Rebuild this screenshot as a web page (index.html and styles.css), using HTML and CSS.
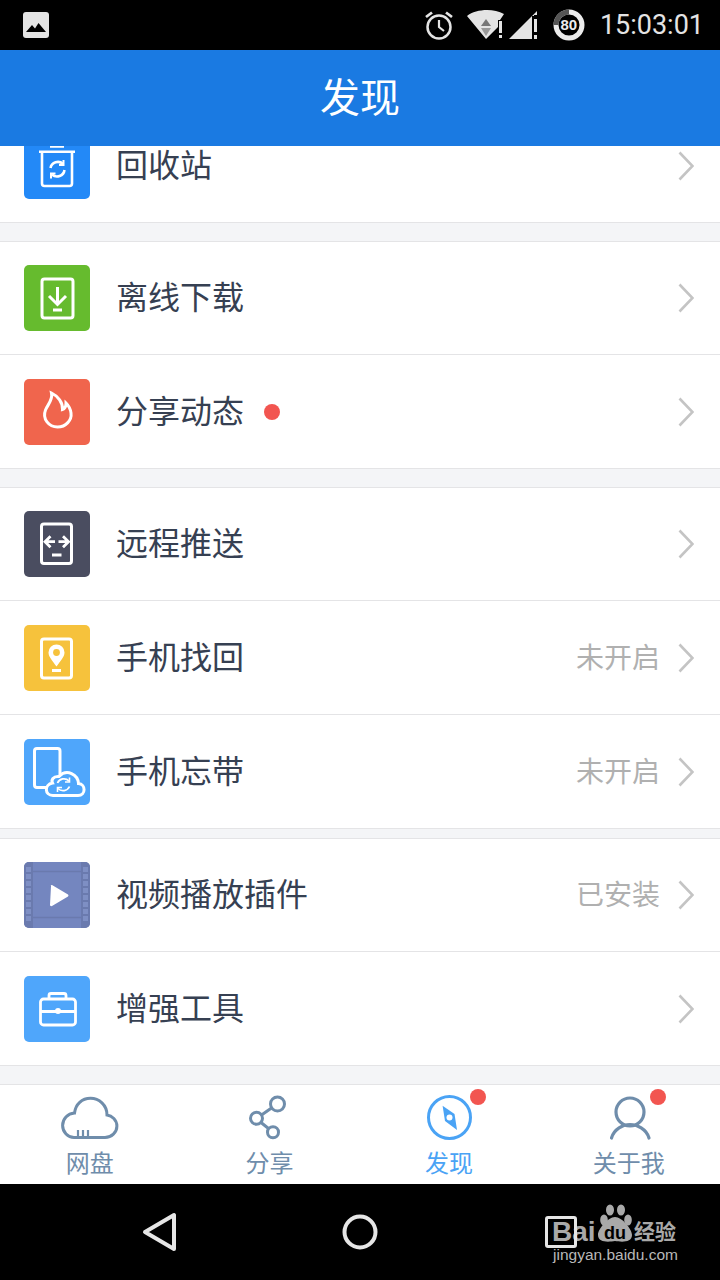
FILE: index.html
```html
<!DOCTYPE html>
<html lang="zh">
<head>
  <meta charset="UTF-8">
  <meta name="viewport" content="width=device-width, initial-scale=1.0">
  <title>发现</title>
  <link rel="stylesheet" href="styles.css">
</head>
<body>
  <div class="screen">
    <div class="status-bar">
      <svg class="status-pic" width="28" height="28" viewBox="0 0 28 28">
        <rect x="1" y="1" width="26" height="26" rx="3" fill="#e4e4e4"/>
        <path d="M4 21 L10 14 L13 17.5 L16.5 12 L24 21 Z" fill="#000"/>
      </svg>
      <div class="status-right">
        <svg width="34" height="34" viewBox="0 0 34 34" fill="none" stroke="#e4e4e4">
          <circle cx="17" cy="19" r="11.5" stroke-width="2.5"/>
          <path d="M17 12 V19 L22 23" stroke-width="2.2"/>
          <path d="M4 9 L10 4.5 M30 9 L24 4.5" stroke-width="2.8"/>
        </svg>
        <svg class="status-wifi" width="38" height="32" viewBox="0 0 38 32">
          <path d="M0 7 C9 0 26 -1 37 5 L33 11 L31 11 L31 18 L19 30 Z" fill="#e4e4e4"/>
          <path d="M19 10 L24 17 H14 Z" fill="#777"/>
          <path d="M14 19 H24 L19 27 Z" fill="#999"/>
          <rect x="32" y="12" width="3" height="12" fill="#e4e4e4"/>
          <rect x="32" y="26" width="3" height="3" fill="#e4e4e4"/>
        </svg>
        <svg class="status-signal" width="30" height="32" viewBox="0 0 30 32">
          <path d="M1 30 L24 7 V30 Z" fill="#e4e4e4"/>
          <path d="M24 7 L29 2 V6 H26 V7 Z" fill="#e4e4e4"/>
          <rect x="26" y="10" width="3" height="13" fill="#e4e4e4"/>
          <rect x="26" y="26" width="3" height="4" fill="#e4e4e4"/>
        </svg>
        <div class="status-battery">
          <svg width="32" height="32" viewBox="0 0 32 32" fill="none" stroke-width="5">
            <circle cx="16" cy="16" r="13" stroke="#ececec"/>
            <path d="M3 16 A13 13 0 0 1 16 3" stroke="#555"/>
          </svg>
          <span class="battery-num">80</span>
        </div>
        <span class="status-time">15:03:01</span>
      </div>
    </div>

    <div class="title-bar">发现</div>

    <div class="list-area">
      <div class="group group-first">
        <div class="row">
          <svg class="row-icon ic-blue" viewBox="0 0 66 66" fill="none" stroke="#fff" stroke-width="2.6">
            <path d="M26 13.5 H40 M15 18.7 H51"/>
            <path d="M18 19 V50.5 Q18 53 20.5 53 H45.5 Q48 53 48 50.5 V19"/>
            <path d="M26.5 35 A7.5 7.5 0 0 1 39 31 M40.500 37 A7.5 7.5 0 0 1 28 41.5"/>
            <path d="M39.5 27 V32 H35 M27 45.5 V40.500 H31.500" stroke-width="2"/>
          </svg>
          <span class="row-name">回收站</span>
          <svg class="chevron" viewBox="0 0 16 30"><path d="M1.5 1.5 L14.5 15 L1.5 28.5"/></svg>
        </div>
      </div>

      <div class="group">
        <div class="row">
          <svg class="row-icon ic-green" viewBox="0 0 66 66" fill="none" stroke="#fff" stroke-width="3">
            <rect x="18" y="14" width="31" height="39" rx="2.5"/>
            <path d="M33.5 22 V39 M25 31 L33.5 39.5 L42 31"/>
            <path d="M29 45 H38"/>
          </svg>
          <span class="row-name">离线下载</span>
          <svg class="chevron" viewBox="0 0 16 30"><path d="M1.5 1.5 L14.5 15 L1.5 28.5"/></svg>
        </div>
        <div class="row">
          <svg class="row-icon ic-red" viewBox="0 0 66 66" fill="none" stroke="#fff" stroke-width="3">
            <path d="M27.5 14 C29 21 24 25 21.5 31 C18 40 25 48 33.5 48 C42 48 48 41 47 34 C46.5 30 44.5 26.5 42 24 C42 28 40.5 30 38.5 30.5 C39 24 34 17 27.5 14 Z"/>
          </svg>
          <span class="row-name">分享动态</span>
          <span class="row-dot"></span>
          <svg class="chevron" viewBox="0 0 16 30"><path d="M1.5 1.5 L14.5 15 L1.5 28.5"/></svg>
        </div>
      </div>

      <div class="group">
        <div class="row">
          <svg class="row-icon ic-dark" viewBox="0 0 66 66" fill="none" stroke="#fff" stroke-width="3">
            <rect x="17.5" y="13" width="30" height="39.5" rx="2.5"/>
            <path d="M31 30.700 H21.500 M26.500 25.200 L21 30.700 L26.500 36.200 M34.500 30.700 H44 M39 25.200 L44.500 30.700 L39 36.200" stroke-width="2.800"/>
            <path d="M28 44 H37.5"/>
          </svg>
          <span class="row-name">远程推送</span>
          <svg class="chevron" viewBox="0 0 16 30"><path d="M1.5 1.5 L14.5 15 L1.5 28.5"/></svg>
        </div>
        <div class="row">
          <svg class="row-icon ic-yellow" viewBox="0 0 66 66" fill="none" stroke="#fff" stroke-width="3">
            <rect x="17.5" y="14" width="30" height="39" rx="2.5"/>
            <path d="M32.5 41.5 C29 36.5 24.5 32 24.5 27.5 A8 8 0 0 1 40.5 27.5 C40.5 32 36 36.5 32.5 41.5 Z" fill="#fff" stroke="none"/>
            <circle cx="32.5" cy="27.5" r="3.4" fill="#f6c23c" stroke="none"/>
            <path d="M28 45.5 H37"/>
          </svg>
          <span class="row-name">手机找回</span>
          <span class="row-value">未开启</span>
          <svg class="chevron" viewBox="0 0 16 30"><path d="M1.5 1.5 L14.5 15 L1.5 28.5"/></svg>
        </div>
        <div class="row">
          <svg class="row-icon ic-sky" viewBox="0 0 66 66" fill="none" stroke="#fff" stroke-width="3">
            <rect x="10.5" y="9.5" width="25.5" height="39" rx="2.5"/>
            <path d="M29 56.5 H54 C62 56.5 62 45 54.5 44.5 C54 36 43 29 35 37.5 C29 37 27 41 28.5 44 C20 45.5 20.5 56.5 29 56.5 Z" fill="#4fa6fb"/>
            <path d="M33.5 44 A7 7 0 0 1 45 42 M45.5 47.5 A7 7 0 0 1 34 49.5" stroke-width="1.8"/>
            <path d="M45.5 38.5 V43 H41 M33.5 53 V48.5 H38" stroke-width="1.6"/>
          </svg>
          <span class="row-name">手机忘带</span>
          <span class="row-value">未开启</span>
          <svg class="chevron" viewBox="0 0 16 30"><path d="M1.5 1.5 L14.5 15 L1.5 28.5"/></svg>
        </div>
      </div>

      <div class="group group-near">
        <div class="row">
          <svg class="row-icon ic-film" viewBox="0 0 66 66">
            <rect x="0" y="0" width="9" height="66" fill="#6a7aae"/>
            <rect x="57" y="0" width="9" height="66" fill="#6a7aae"/>
            <path d="M2 5 h5 v5 h-5z M2 12 h5 v5 h-5z M2 19 h5 v5 h-5z M2 26 h5 v5 h-5z M2 33 h5 v5 h-5z M2 40 h5 v5 h-5z M2 47 h5 v5 h-5z M2 54 h5 v5 h-5z M59 5 h5 v5 h-5z M59 12 h5 v5 h-5z M59 19 h5 v5 h-5z M59 26 h5 v5 h-5z M59 33 h5 v5 h-5z M59 40 h5 v5 h-5z M59 47 h5 v5 h-5z M59 54 h5 v5 h-5z" fill="#7e8fc4"/>
            <path d="M9 9.5 H57 M9 55.5 H57" stroke="#6a7aae" stroke-width="1.6"/>
            <path d="M27 24 Q26 23 28 23 L44 32.5 Q45 33.5 44 34.5 L28 44 Q26 44.5 26 43 Z" fill="#fff"/>
          </svg>
          <span class="row-name">视频播放插件</span>
          <span class="row-value">已安装</span>
          <svg class="chevron" viewBox="0 0 16 30"><path d="M1.5 1.5 L14.5 15 L1.5 28.5"/></svg>
        </div>
        <div class="row">
          <svg class="row-icon ic-sky" viewBox="0 0 66 66" fill="none" stroke="#fff" stroke-width="2.8">
            <rect x="16.5" y="23" width="35" height="26" rx="3"/>
            <path d="M25 23 V19.5 Q25 17.5 27 17.5 H40 Q42 17.5 42 19.5 V23"/>
            <path d="M16.5 35.5 H51"/>
            <circle cx="34" cy="35" r="3" fill="#fff" stroke="none"/>
          </svg>
          <span class="row-name">增强工具</span>
          <svg class="chevron" viewBox="0 0 16 30"><path d="M1.5 1.5 L14.5 15 L1.5 28.5"/></svg>
        </div>
      </div>
    </div>

    <div class="tab-bar">
      <div class="tab">
        <svg class="tab-icon" viewBox="0 0 64 50" fill="none" stroke="#6f8dab" stroke-width="3">
          <path d="M16 44.500 H47 C53.500 44.500 58.900 39.500 58.900 33 C58.900 27 54 22.500 49 22 C49 12 41 5.300 32.500 5.300 C24 5.300 17.500 11 16.500 20 C9.500 20.500 4.600 26 4.600 32.500 C4.600 39 10 44.500 16 44.500 Z"/>
          <path d="M20 44 V37 M25 44 V37 M30 44 V37" stroke-width="2.200"/>
        </svg>
        <span class="tab-label">网盘</span>
      </div>
      <div class="tab">
        <svg class="tab-icon" viewBox="0 0 64 50" fill="none" stroke="#6f8dab" stroke-width="3">
          <circle cx="40.500" cy="11" r="7"/>
          <circle cx="19.500" cy="25.300" r="6"/>
          <circle cx="36" cy="39.300" r="5.500"/>
          <path d="M34.500 15 L24.500 22 M24 29.500 L31.500 35.500"/>
        </svg>
        <span class="tab-label">分享</span>
      </div>
      <div class="tab tab-active">
        <svg class="tab-icon" viewBox="0 0 64 50">
          <circle cx="32.500" cy="24.500" r="21" fill="none" stroke="#4aa3f5" stroke-width="3"/>
          <path d="M25.600 12.700 L37.500 21 L40 37 L28 28 Z" fill="#4aa3f5"/>
          <circle cx="32.500" cy="24.500" r="3" fill="#fff"/>
        </svg>
        <span class="tab-label">发现</span>
        <span class="tab-dot"></span>
      </div>
      <div class="tab">
        <svg class="tab-icon" viewBox="0 0 64 50" fill="none" stroke="#6f8dab" stroke-width="3.200" stroke-linecap="round">
          <circle cx="33" cy="19" r="14"/>
          <path d="M14.500 45 C17 36 26 31.500 33 31.500 C40 31.500 49.500 36 52 45"/>
        </svg>
        <span class="tab-label">关于我</span>
        <span class="tab-dot"></span>
      </div>
    </div>

    <div class="nav-bar">
      <svg class="nav-back" width="36" height="40" viewBox="0 0 36 40" fill="none" stroke="#e6e6e6" stroke-width="4" stroke-linejoin="round">
        <path d="M32 3 V37 L3 20 Z"/>
      </svg>
      <svg class="nav-home" width="36" height="36" viewBox="0 0 36 36" fill="none" stroke="#e6e6e6" stroke-width="4">
        <circle cx="18" cy="18" r="15.500"/>
      </svg>
      <div class="watermark">
        <span class="wm-bai">Bai</span>
        <span class="wm-box"></span>
        <span class="wm-paw">
          <svg width="38" height="40" viewBox="0 0 38 40" fill="#a9a9a9">
            <ellipse cx="9" cy="17" rx="3.800" ry="5.500"/>
            <ellipse cx="15" cy="7" rx="4" ry="5.500"/>
            <ellipse cx="26" cy="7" rx="4" ry="5.500"/>
            <ellipse cx="33" cy="17" rx="3.800" ry="5.500"/>
            <path d="M20 14 C27 14 37 26 37 32 C37 40 26 39 20 38 C14 39 3 40 3 32 C3 26 13 14 20 14 Z"/>
          </svg>
          <span class="wm-du">du</span>
        </span>
        <span class="wm-cn">经验</span>
        <span class="wm-url">jingyan.baidu.com</span>
      </div>
    </div>
  </div>
</body>
</html>
```

FILE: styles.css
```css
html, body {
  margin: 0;
  padding: 0;
  background-color: #000;
}
body {
  font-family: "Noto Sans CJK SC", "Noto Sans", sans-serif;
}
.screen {
  width: 720px;
  height: 1280px;
  display: flex;
  flex-direction: column;
  overflow: hidden;
  background-color: #f4f5f7;
}

/* status bar */
.status-bar {
  height: 50px;
  flex: none;
  background-color: #000;
  display: flex;
  align-items: center;
  justify-content: space-between;
  padding: 0 16px 0 22px;
}
.status-pic {
  display: block;
}
.status-right {
  display: flex;
  align-items: center;
}
.status-wifi {
  margin-left: 11px;
}
.status-signal {
  margin-left: 3px;
}
.status-battery {
  position: relative;
  width: 32px;
  height: 32px;
  margin-left: 15px;
}
.status-battery svg {
  display: block;
}
.battery-num {
  position: absolute;
  left: 0;
  right: 0;
  top: 7px;
  text-align: center;
  font-family: "Liberation Sans", sans-serif;
  font-weight: bold;
  font-size: 15px;
  line-height: 18px;
  color: #ececec;
}
.status-time {
  margin-left: 15px;
  font-family: Roboto, sans-serif;
  font-size: 27px;
  color: #e4e4e4;
}

/* title, sits over the scrolled list */
.title-bar {
  box-sizing: border-box;
  height: 96px;
  flex: none;
  padding-bottom: 6px;
  background-color: #1a7ae2;
  color: #fff;
  font-size: 40px;
  display: flex;
  align-items: center;
  justify-content: center;
  position: relative;
  z-index: 1;
}

/* list */
.list-area {
  flex: 1;
  min-height: 0;
}
.group {
  background-color: #fff;
  border-top: 1px solid #e4e4e6;
  margin-top: 18px;
}
.group-first {
  border-top: 0;
  margin-top: -36px;
}
.group-near {
  margin-top: 9px;
}
.row {
  box-sizing: border-box;
  height: 114px;
  border-bottom: 1px solid #e4e4e6;
  display: flex;
  align-items: center;
  padding: 0 26px 0 24px;
}
.row:first-child {
  height: 113px;
}
.row-icon {
  width: 66px;
  height: 66px;
  flex: none;
  border-radius: 5px;
}
.ic-blue { background-color: #2389f7; }
.ic-green { background-color: #66bb2e; }
.ic-red { background-color: #f0654d; }
.ic-dark { background-color: #4a4d60; }
.ic-yellow { background-color: #f6c23c; }
.ic-sky { background-color: #4fa6fb; }
.ic-film { background-color: #7486bf; }
.row-name {
  margin-left: 26px;
  padding-bottom: 6px;
  font-size: 32px;
  line-height: 34px;
  color: #364052;
}
.row-dot {
  width: 16px;
  height: 16px;
  margin-left: 20px;
  border-radius: 50%;
  background-color: #f25550;
}
.row-value {
  margin-left: auto;
  margin-right: 18px;
  padding-bottom: 4px;
  font-size: 28px;
  line-height: 34px;
  color: #b0b0b0;
}
.chevron {
  width: 16px;
  height: 30px;
  flex: none;
  margin-left: auto;
  fill: none;
  stroke: #c4c4c4;
  stroke-width: 2.6;
}
.row-value + .chevron {
  margin-left: 0;
}

/* bottom tabs */
.tab-bar {
  box-sizing: border-box;
  height: 100px;
  flex: none;
  padding-right: 1.5px;
  background-color: #fff;
  border-top: 1px solid #e4e4e6;
  display: flex;
}
.tab {
  position: relative;
  flex: 1;
  display: flex;
  flex-direction: column;
  align-items: center;
}
.tab-icon {
  width: 64px;
  height: 50px;
  margin-top: 8px;
}
.tab-label {
  font-size: 24px;
  line-height: 30px;
  margin-top: 4px;
  color: #6f8dab;
}
.tab-active .tab-label {
  color: #4aa3f5;
}
.tab-dot {
  position: absolute;
  top: 4px;
  left: 111px;
  width: 16px;
  height: 16px;
  border-radius: 50%;
  background-color: #f25550;
}

/* android nav */
.nav-bar {
  position: relative;
  height: 96px;
  flex: none;
  background-color: #000;
}
.nav-back {
  position: absolute;
  left: 142px;
  top: 28px;
}
.nav-home {
  position: absolute;
  left: 342px;
  top: 30px;
}
.watermark {
  position: absolute;
  left: 0;
  top: 0;
  width: 720px;
  height: 96px;
  color: #a9a9a9;
  font-family: "Liberation Sans", sans-serif;
}
.wm-box {
  position: absolute;
  left: 545px;
  top: 32px;
  width: 26px;
  height: 26px;
  border: 3px solid #e6e6e6;
  border-radius: 3px;
}
.wm-bai {
  position: absolute;
  left: 552px;
  top: 32px;
  font-size: 28px;
  line-height: 32px;
  font-weight: bold;
}
.wm-paw {
  position: absolute;
  left: 595px;
  top: 19px;
  width: 38px;
  height: 40px;
}
.wm-paw svg {
  display: block;
}
.wm-du {
  position: absolute;
  left: 7px;
  top: 20px;
  width: 26px;
  text-align: center;
  font-size: 18px;
  line-height: 20px;
  font-weight: bold;
  color: #000;
}
.wm-cn {
  position: absolute;
  left: 634px;
  top: 31px;
  font-family: "Noto Sans CJK SC", sans-serif;
  font-size: 21px;
  line-height: 30px;
  font-weight: bold;
}
.wm-url {
  position: absolute;
  left: 553px;
  top: 61px;
  font-size: 15.5px;
  line-height: 20px;
  color: #b8b8b8;
}
```
